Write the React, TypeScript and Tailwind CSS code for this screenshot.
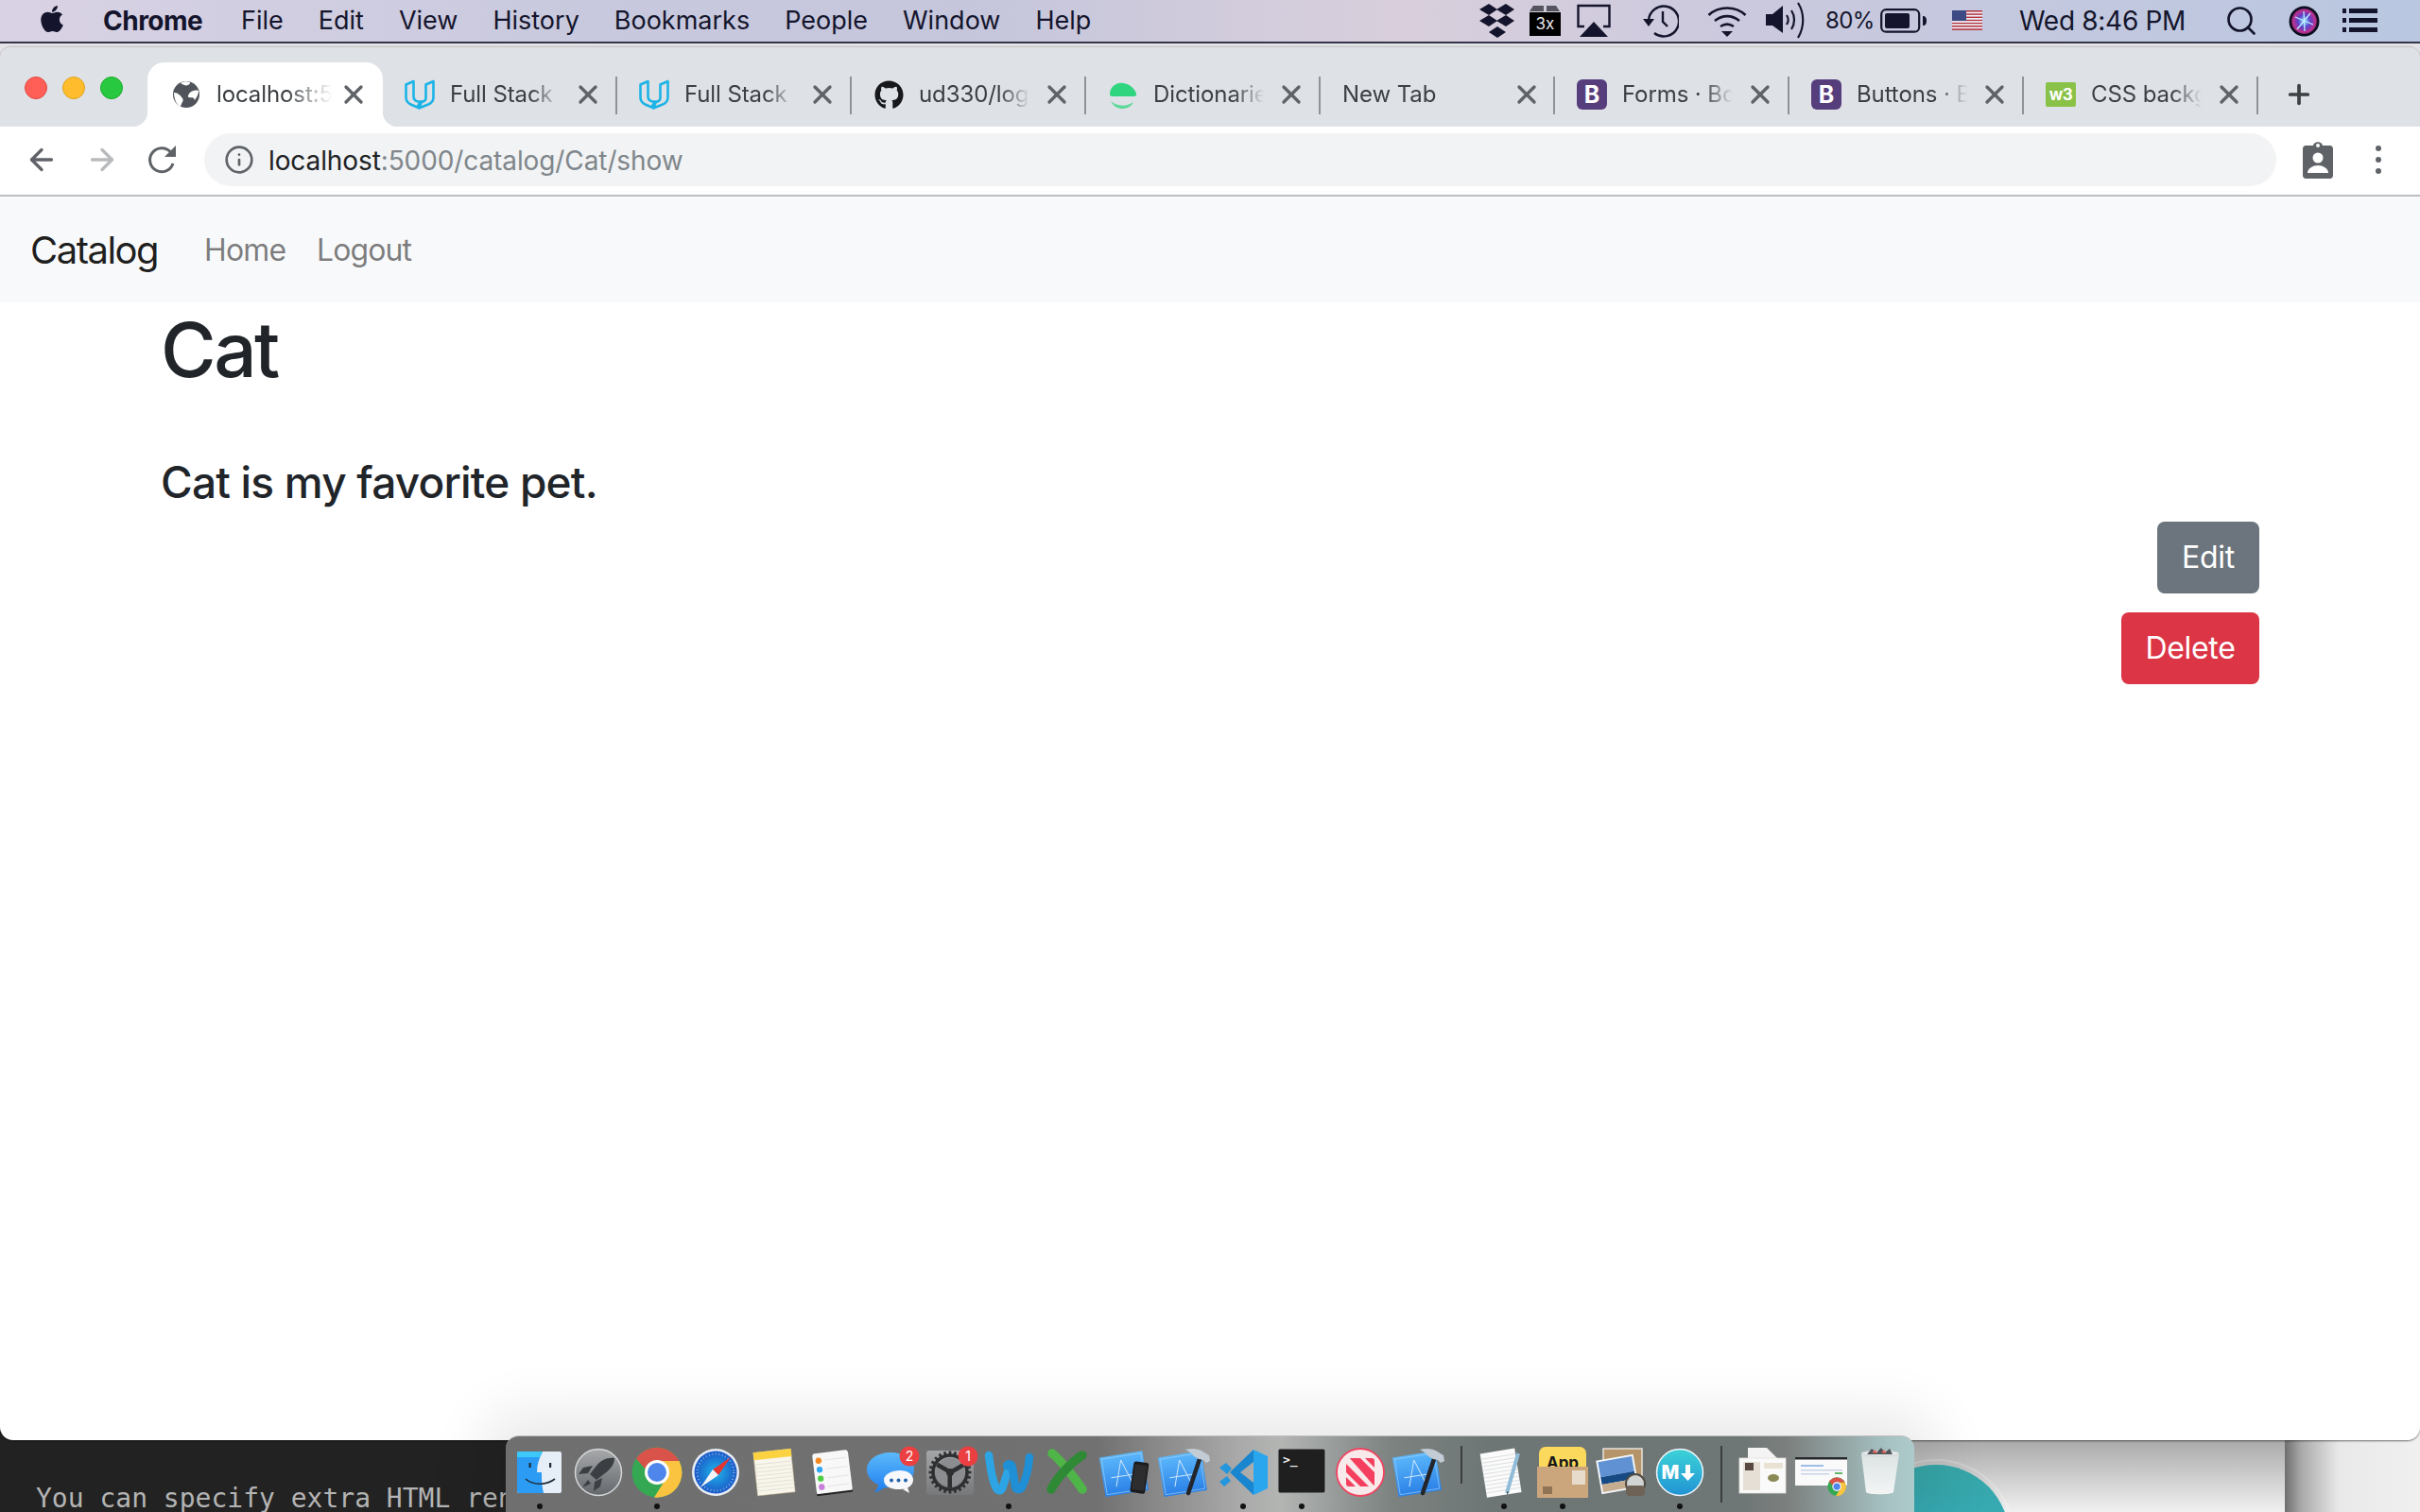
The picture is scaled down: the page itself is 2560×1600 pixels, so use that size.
import { useId } from "react";
import type { ReactNode } from "react";
import { X, Plus, ArrowLeft, ArrowRight, Info, Search } from "lucide-react";
import { FaApple, FaGithub } from "react-icons/fa";

const INK = "#14152c";

/* ---------- menu bar icons ---------- */

function DropboxIcon() {
  const diamonds = [
    [10, 7],
    [28, 7],
    [10, 19],
    [28, 19],
  ];
  return (
    <svg width="38" height="38" viewBox="0 0 38 38" fill={INK}>
      {diamonds.map(([x, y]) => (
        <polygon key={`${x}-${y}`} points={`${x - 10},${y} ${x},${y - 6} ${x + 9},${y} ${x},${y + 6}`} />
      ))}
      <polygon points="10,31 19,25 28,31 19,37" />
    </svg>
  );
}

function ThreeXIcon() {
  return (
    <svg width="33" height="34" viewBox="0 0 33 34">
      <polygon points="4,1 15,1 15,7 0,7" fill="#55555f" />
      <polygon points="18,1 28,1 32,7 18,7" fill="#55555f" />
      <rect x="0" y="8" width="33" height="25" fill="#000" />
      <text x="16.5" y="26" textAnchor="middle" fontSize="17" fill="#e8e8e8" fontFamily="Inter, sans-serif">
        3x
      </text>
    </svg>
  );
}

function AirplayIcon() {
  return (
    <svg width="36" height="36" viewBox="0 0 36 36" fill="none" stroke={INK} strokeWidth="2.4">
      <path d="M8 24H1.5V2h33v22H28" />
      <polygon points="18,19 33,35 3,35" fill={INK} stroke="none" />
    </svg>
  );
}

function TimeMachineIcon() {
  return (
    <svg width="38" height="36" viewBox="0 0 38 36" fill="none" stroke={INK} strokeWidth="2.4">
      <path d="M6 18A16 16 0 1 1 12 31" />
      <polygon points="0,16 12,16 6,24" fill={INK} stroke="none" />
      <path d="M21 8v11l5 5" />
    </svg>
  );
}

function WifiIcon() {
  return (
    <svg width="42" height="36" viewBox="0 0 42 36" fill="none" stroke={INK} strokeWidth="2.6">
      <path d="M1.5 12C12 2 30 2 40.5 12" />
      <path d="M8 18c8-6.5 18-6.5 26 0" />
      <path d="M14 24c4.500-3 9.500-3 14 0" />
      <polygon points="15,29 27,29 21,35" fill={INK} stroke="none" />
    </svg>
  );
}

function VolumeIcon() {
  return (
    <svg width="42" height="40" viewBox="0 0 42 40" fill="none" stroke={INK} strokeWidth="2.2">
      <polygon points="0,13 7,13 18,4 18,33 7,25 0,25" fill={INK} stroke="none" />
      <path d="M22 14c2 3 2 7 0 10" />
      <path d="M27 9c4 6 4 14 0 20" />
      <path d="M34 1c7 11 7 25 0 37" />
    </svg>
  );
}

function BatteryIcon() {
  return (
    <svg width="50" height="26" viewBox="0 0 50 26" fill={INK}>
      <rect x="1.200" y="1.200" width="40" height="23.500" rx="5" fill="none" stroke={INK} strokeWidth="2.2" />
      <rect x="5" y="5" width="26" height="16" rx="2" />
      <path d="M45 8c3 0 4 2 4 5s-1 5-4 5z" />
    </svg>
  );
}

function FlagIcon() {
  return (
    <svg width="32" height="22" viewBox="0 0 32 22">
      {Array.from({ length: 7 }).map((_, i) => (
        <rect key={i} x="0" y={i * 3.2} width="32" height="1.700" fill="#b5303d" />
      ))}
      {Array.from({ length: 6 }).map((_, i) => (
        <rect key={i} x="0" y={1.700 + i * 3.2} width="32" height="1.500" fill="#f4f4f8" />
      ))}
      <rect x="0" y="0" width="15" height="11" fill="#3d4a83" />
    </svg>
  );
}

function SiriIcon() {
  const id = useId();
  return (
    <svg width="33" height="33" viewBox="0 0 33 33">
      <defs>
        <radialGradient id={id} cx="50%" cy="50%" r="55%">
          <stop offset="0" stopColor="#8de0ff" />
          <stop offset="0.45" stopColor="#5b3fc9" />
          <stop offset="0.8" stopColor="#c0318f" />
          <stop offset="1" stopColor="#14152c" />
        </radialGradient>
      </defs>
      <circle cx="16.500" cy="16.500" r="16" fill="#0c0d1f" />
      <circle cx="16.500" cy="16.500" r="13.500" fill={`url(#${id})`} />
      <path d="M7 12l19 8M9 25L23 8M16 6l1 21" stroke="#bdf0ff" strokeWidth="1.300" />
    </svg>
  );
}

function ListIcon() {
  return (
    <svg width="37" height="26" viewBox="0 0 37 26" fill={INK}>
      <rect x="0" y="0" width="4" height="5" />
      <rect x="7" y="0" width="30" height="5" />
      <rect x="0" y="10" width="4" height="5" />
      <rect x="7" y="10" width="30" height="5" />
      <rect x="0" y="20" width="4" height="5" />
      <rect x="7" y="20" width="30" height="5" />
    </svg>
  );
}

/* ---------- favicons ---------- */

function GlobeFavicon() {
  return (
    <svg width="30" height="30" viewBox="0 0 30 30">
      <circle cx="15" cy="15" r="14" fill="#50545a" />
      <path d="M2 13c4 0 7 3 9 6s-1 4-2 9c-4-2-7-8-7-15z" fill="#fff" />
      <path d="M28 11c-3-1-7 0-9 2s-3 5-1 5c2 1 5-1 6 3 2-3 4-6 4-10z" fill="#fff" />
      <path d="M9 3c3 2 6 3 8 2s2-2 2-3c-3-1-7-1-10 1z" fill="#fff" />
    </svg>
  );
}

function UdacityFavicon() {
  return (
    <svg width="32" height="32" viewBox="0 0 32 32" fill="none" stroke="#1cb4e6" strokeWidth="2.600" strokeLinejoin="round">
      <path d="M1.500 5.500l8-3.500v16c0 3 2 5 5 5.500l4 0c-3 .5-3 2-3 2l-2 4-7-3c-3-1.500-5-4-5-7.500z" />
      <path d="M30.500 2l-8 3.500v14c0 3-2 4-4.500 4.500l-3 6.500 10-4c3.500-1.500 5.500-4 5.500-7.500z" />
    </svg>
  );
}

function DictionaryFavicon() {
  return (
    <svg width="32" height="30" viewBox="0 0 32 30">
      <path d="M2 15C2 7 9 2 16 3c7 1 12 5 14 11 1 2-1 3-3 3H5c-2 0-3-1-3-2z" fill="#2fd67f" />
      <path d="M3 22c7 6 17 6 24 1-3 6-8 7-12 7s-9-2-12-8z" fill="#2fd67f" opacity="0.75" />
    </svg>
  );
}

function BootstrapFavicon() {
  return (
    <div className="w-[32px] h-[32px] rounded-[6px] bg-[#563d7c] flex items-center justify-center text-white text-[25px] font-bold leading-none">
      B
    </div>
  );
}

function W3Favicon() {
  return (
    <div className="w-[32px] h-[26px] rounded-[2px] bg-[#8ac249] flex items-center justify-center text-white text-[17px] font-bold leading-none tracking-tight">
      w3
    </div>
  );
}

/* ---------- dock icons, all on a 60x60 box centred on the cell ---------- */

function FinderIcon() {
  return (
    <svg width="60" height="60" viewBox="0 0 60 60">
      <rect x="6" y="8" width="47" height="44" rx="2" fill="#e6eef7" />
      <path d="M8 8h25c-4 8-6 14-6 22h5c0 8 0 14 2 22H8a2 2 0 0 1-2-2V10a2 2 0 0 1 2-2z" fill="#2c9bf3" />
      <path d="M8 8h25l-3 6H6v-4a2 2 0 0 1 2-2z" fill="#3cc8f8" />
      <rect x="18.500" y="20" width="2.200" height="5" fill="#1d2b3a" />
      <rect x="40" y="20" width="2.200" height="5" fill="#1d2b3a" />
      <path d="M15 37c8 7 22 7 31 0" fill="none" stroke="#1d2b3a" strokeWidth="1.600" />
    </svg>
  );
}

function LaunchpadIcon() {
  const id = useId();
  return (
    <svg width="60" height="60" viewBox="0 0 60 60">
      <defs>
        <linearGradient id={id} x1="0" y1="0" x2="0" y2="1">
          <stop offset="0" stopColor="#a7a9ab" />
          <stop offset="1" stopColor="#63676b" />
        </linearGradient>
      </defs>
      <circle cx="30" cy="30" r="24.500" fill={`url(#${id})`} stroke="#d4d6d8" strokeWidth="1.500" />
      <path d="M47 15c-8-1-14 2-19 8l-7 9 7 6 9-7c6-5 10-9 10-16z" fill="#3b3e42" />
      <path d="M24 23l-10 2-5 7 10-1zM34 36l-2 9-7 5 1-10zM19 38l-6 8 9-4z" fill="#3b3e42" />
    </svg>
  );
}

function ChromeBall() {
  return (
    <>
      <circle cx="30" cy="30" r="26.500" fill="#34a853" />
      <path d="M8 15.500A26.500 26.500 0 0 1 53.500 18H30c-6 0-11 4-12 9z" fill="#d9534a" />
      <path d="M53.500 18A26.500 26.500 0 0 1 27 56.500L40 36c2-6 0-14-10-18z" fill="#fbc440" />
      <circle cx="30" cy="30" r="13" fill="#fff" />
      <circle cx="30" cy="30" r="10" fill="#4f86ec" />
    </>
  );
}

function ChromeIcon() {
  return (
    <svg width="60" height="60" viewBox="0 0 60 60">
      <ChromeBall />
    </svg>
  );
}

function SafariIcon() {
  const id = useId();
  return (
    <svg width="60" height="60" viewBox="0 0 60 60">
      <defs>
        <radialGradient id={id} cx="50%" cy="50%" r="55%">
          <stop offset="0" stopColor="#1fb5ea" />
          <stop offset="1" stopColor="#1b50c4" />
        </radialGradient>
      </defs>
      <circle cx="30" cy="30" r="25" fill="#e9eef5" />
      <circle cx="30" cy="30" r="22.500" fill={`url(#${id})`} />
      <circle cx="30" cy="30" r="19.500" fill="none" stroke="#cfe3fa" strokeWidth="2" strokeDasharray="1 2.500" opacity="0.6" />
      <polygon points="46,14 33,33 27,27" fill="#e5352f" />
      <polygon points="14,46 33,33 27,27" fill="#f3f4f6" />
    </svg>
  );
}

function NotesIcon() {
  const lines = [20, 24, 28, 32, 36, 40, 44, 48];
  return (
    <svg width="60" height="60" viewBox="0 0 60 60">
      <g transform="rotate(-6 30 30)">
        <rect x="10" y="7" width="40" height="46" fill="#f8f5ea" stroke="#b0a27c" strokeWidth="0.500" />
        <rect x="10" y="7" width="40" height="8" fill="#fbd341" />
        {lines.map((y) => (
          <line key={y} x1="10" x2="50" y1={y} y2={y} stroke="#dddbd2" strokeWidth="0.700" />
        ))}
      </g>
    </svg>
  );
}

function RemindersIcon() {
  const dots = [
    [16, "#f58a23"],
    [25.500, "#31a8f3"],
    [35, "#4cce42"],
    [44, "#c97fdb"],
  ] as const;
  return (
    <svg width="60" height="60" viewBox="0 0 60 60">
      <g transform="rotate(-7 30 30)">
        <rect x="10.500" y="8" width="38" height="44" rx="3" fill="#f8f8f8" />
        <rect x="10.500" y="51" width="38" height="2" fill="#222" />
        {dots.map(([y, c]) => (
          <g key={y}>
            <circle cx="16.500" cy={y} r="3.200" fill={c} />
            <line x1="23" x2="46" y1={y} y2={y} stroke="#ddd" strokeWidth="0.700" />
          </g>
        ))}
      </g>
    </svg>
  );
}

function Badge({ x, n }: { x: number; n: string }) {
  return (
    <>
      <circle cx={x} cy="13" r="10.500" fill="#ec3f41" />
      <text x={x} y="18" textAnchor="middle" fontSize="14" fill="#fff" fontFamily="Inter, sans-serif">
        {n}
      </text>
    </>
  );
}

function MessagesIcon() {
  const id = useId();
  return (
    <svg width="60" height="60" viewBox="0 0 60 60">
      <defs>
        <linearGradient id={id} x1="0" y1="0" x2="0" y2="1">
          <stop offset="0" stopColor="#5cb9fb" />
          <stop offset="1" stopColor="#1e7ff0" />
        </linearGradient>
      </defs>
      <path d="M29 9c14 0 25 8 25 18 0 11-11 19-25 19-3 0-6 0-8 1-2 2-6 4-9 4 2-2 4-5 4-8C9 40 4 34 4 27 4 17 15 9 29 9z" fill={`url(#${id})`} />
      <path d="M39 28c8 0 14 4 14 10s-6 10-14 10h-3c-4 0-14-2-14-10 0-6 9-10 17-10z" fill="#f7f8fb" />
      <path d="M47 46l2 6-7-4z" fill="#f7f8fb" />
      <circle cx="30" cy="38.500" r="2" fill="#2463ac" />
      <circle cx="37.500" cy="38.500" r="2" fill="#2463ac" />
      <circle cx="45" cy="38.500" r="2" fill="#2463ac" />
      <Badge x={49} n="2" />
    </svg>
  );
}

function SystemPrefsIcon() {
  const id = useId();
  const spokes = [0, 120, 240];
  const teeth = Array.from({ length: 24 }).map((_, i) => i * 15);
  return (
    <svg width="60" height="60" viewBox="0 0 60 60">
      <defs>
        <linearGradient id={id} x1="0" y1="0" x2="0" y2="1">
          <stop offset="0" stopColor="#a4a6a8" />
          <stop offset="1" stopColor="#76787a" />
        </linearGradient>
      </defs>
      <rect x="5" y="7" width="50" height="47" rx="3" fill={`url(#${id})`} />
      {teeth.map((a) => (
        <rect key={a} x="28.700" y="7.500" width="2.600" height="5" fill="#2e2f31" transform={`rotate(${a} 30 30)`} />
      ))}
      <circle cx="30" cy="30" r="18" fill="none" stroke="#2e2f31" strokeWidth="3.500" />
      <circle cx="30" cy="30" r="15" fill="#8b8d90" />
      {spokes.map((a) => (
        <rect key={a} x="28" y="14" width="4.500" height="16" fill="#2e2f31" transform={`rotate(${a + 60} 30 30)`} />
      ))}
      <circle cx="30" cy="30" r="4" fill="#2e2f31" />
      <Badge x={49} n="1" />
    </svg>
  );
}

function WordIcon() {
  return (
    <svg width="60" height="60" viewBox="0 0 60 60" fill="none" strokeLinecap="round">
      <path d="M9 12c2 14 3 26 8 35 3 4 6 2 7-2l6-19" stroke="#2da4e3" strokeWidth="8.500" />
      <path d="M28 23c2-3 5-2 6 2l3 20c1 4 5 4 7 1 4-8 7-20 8-32" stroke="#1f8fd6" strokeWidth="8.500" />
    </svg>
  );
}

function ExcelIcon() {
  return (
    <svg width="60" height="60" viewBox="0 0 60 60" fill="none" strokeLinecap="round">
      <path d="M14 10c7 5 24 26 32 38" stroke="#4fb548" strokeWidth="9.500" />
      <path d="M46 12C37 17 20 34 13 48" stroke="#2f8a36" strokeWidth="9.500" />
    </svg>
  );
}

function BlueprintPage() {
  const id = useId();
  return (
    <>
      <defs>
        <linearGradient id={id} x1="0" y1="0" x2="0" y2="1">
          <stop offset="0" stopColor="#5bb7fb" />
          <stop offset="1" stopColor="#2a80e6" />
        </linearGradient>
      </defs>
      <g transform="rotate(-9 26 32)">
        <rect x="5" y="11" width="46" height="42" fill={`url(#${id})`} />
        <rect x="7" y="13" width="42" height="38" fill="none" stroke="#a5d4fb" strokeWidth="0.600" />
        <path d="M27 17L18 44M27 17l9 27M14 34h28" fill="none" stroke="#cce6fd" strokeWidth="1" />
      </g>
    </>
  );
}

function SimulatorIcon() {
  return (
    <svg width="60" height="60" viewBox="0 0 60 60">
      <BlueprintPage />
      <g transform="rotate(8 44 38)">
        <rect x="36" y="19" width="16" height="33" rx="2.500" fill="#1b1b1d" />
        <rect x="37.500" y="22" width="13" height="27" fill="#2d2d30" />
      </g>
    </svg>
  );
}

function XcodeIcon() {
  return (
    <svg width="60" height="60" viewBox="0 0 60 60">
      <BlueprintPage />
      <path d="M46 16L34 52" stroke="#23252a" strokeWidth="4.500" strokeLinecap="round" />
      <path d="M31 6c7-2 15-1 20 3l5 3 1 6-4 2-3-3-5-1-5-3c-2-3-5-5-9-7z" fill="#c3ccd4" />
    </svg>
  );
}

function VSCodeIcon() {
  return (
    <svg width="60" height="60" viewBox="0 0 60 60">
      <path d="M41 6l15 7v34l-15 7z" fill="#2aa6ee" />
      <path d="M41 6L16 30l25 24 0-13-14-11 14-11z" fill="#1a86cf" />
      <path d="M12 20L5 25l8 7 5-6zM13 34l-8 6 5 5 7-6z" fill="#2496dd" />
    </svg>
  );
}

function TerminalIcon() {
  return (
    <svg width="60" height="60" viewBox="0 0 60 60">
      <rect x="5" y="5" width="50" height="47" rx="2" fill="#1f1f1f" stroke="#a9acad" strokeWidth="1" />
      <text x="10" y="21" fontSize="13" fontWeight="700" fill="#f2f2f2" fontFamily="'DejaVu Sans Mono', monospace">
        {">_"}
      </text>
    </svg>
  );
}

function NewsIcon() {
  return (
    <svg width="60" height="60" viewBox="0 0 60 60">
      <circle cx="30" cy="30" r="25" fill="#f8e9ea" stroke="#f04461" strokeWidth="1.800" />
      <rect x="15" y="15" width="30" height="30" rx="3" fill="#f4405e" />
      <path d="M13 19l28 28h6L17 13z" fill="#f8e9ea" />
      <path d="M28 13h5l14 14v5zM13 28v5l14 14h5z" fill="#f8e9ea" />
    </svg>
  );
}

function TextEditIcon() {
  return (
    <svg width="60" height="60" viewBox="0 0 60 60">
      <g transform="rotate(-9 28 30)">
        <rect x="8" y="7" width="37" height="47" fill="#fbfbfb" />
        {[13, 17, 21, 25, 29, 33, 37, 41, 45, 49].map((y) => (
          <line key={y} x1="8" x2="45" y1={y} y2={y} stroke="#c9ccd2" strokeWidth="0.600" />
        ))}
      </g>
      <path d="M45 10L33 52" stroke="#90bcd9" strokeWidth="4" />
      <path d="M33.500 50l-.5 4 2-3z" fill="#333" />
    </svg>
  );
}

function AppBoxIcon() {
  return (
    <svg width="60" height="60" viewBox="0 0 60 60">
      <rect x="5" y="3" width="50" height="30" rx="7" fill="#fbd95d" />
      <text x="30" y="26" textAnchor="middle" fontSize="17" fontWeight="700" fill="#1a1a1a" fontFamily="Inter, sans-serif">
        App
      </text>
      <rect x="3" y="24" width="54" height="33" fill="#cba67c" />
      <rect x="40" y="28" width="14" height="15" fill="#e7dccb" />
      <rect x="9" y="45" width="10" height="8" fill="#67533c" opacity="0.6" />
    </svg>
  );
}

function PreviewIcon() {
  return (
    <svg width="60" height="60" viewBox="0 0 60 60">
      <rect x="11" y="5" width="41" height="40" fill="#b49468" stroke="#e8e4da" strokeWidth="1.500" />
      <g transform="rotate(-10 26 32)">
        <rect x="6" y="14" width="40" height="36" fill="#f2f4f6" />
        <rect x="8" y="16" width="36" height="16" fill="#5f91d3" />
        <rect x="8" y="32" width="36" height="8" fill="#164a84" />
        <rect x="8" y="40" width="36" height="8" fill="#c6ad90" />
      </g>
      <circle cx="45" cy="42" r="10" fill="#d2d4d4" stroke="#4f4a42" strokeWidth="2" />
      <rect x="35" y="44" width="20" height="11" rx="4" fill="#6e6256" />
    </svg>
  );
}

function MarkdownIcon() {
  const id = useId();
  return (
    <svg width="60" height="60" viewBox="0 0 60 60">
      <defs>
        <linearGradient id={id} x1="0" y1="0" x2="0" y2="1">
          <stop offset="0" stopColor="#3cd3d8" />
          <stop offset="1" stopColor="#2193d4" />
        </linearGradient>
      </defs>
      <circle cx="30" cy="30" r="24.500" fill={`url(#${id})`} stroke="#f2f6f8" strokeWidth="1.500" />
      <text x="20" y="37" textAnchor="middle" fontSize="20" fontWeight="800" fill="#fff" fontFamily="Inter, sans-serif">
        M
      </text>
      <path d="M41 22v9h5l-7.500 8-7.500-8h5v-9z" fill="#fff" />
    </svg>
  );
}

function DocThumbIcon() {
  return (
    <svg width="60" height="60" viewBox="0 0 60 60">
      <path d="M14 4h20l12 12v16H14z" fill="#f4f4f4" />
      <rect x="5" y="15" width="49" height="37" fill="#fafafa" stroke="#e4e0dc" strokeWidth="0.800" />
      <rect x="9" y="19" width="18" height="30" fill="#e5dfd5" />
      <rect x="11" y="20" width="9" height="8" fill="#584a42" />
      <rect x="31" y="20" width="20" height="6" fill="#e9e2d2" />
      <ellipse cx="41" cy="36" rx="6" ry="4" fill="#8a8a56" />
    </svg>
  );
}

function PageThumbIcon() {
  return (
    <svg width="60" height="60" viewBox="0 0 60 60">
      <rect x="2" y="14" width="55" height="30" fill="#fafafa" />
      <rect x="2" y="14" width="55" height="2.500" fill="#26282b" />
      <rect x="8" y="22" width="24" height="2" fill="#9bbde8" />
      <rect x="8" y="27" width="44" height="1.500" fill="#c6d4e8" />
      <rect x="8" y="31" width="30" height="1.500" fill="#c6d4e8" />
      <rect x="44" y="30" width="8" height="2" fill="#64b865" />
      <g transform="translate(35 34) scale(0.37)">
        <ChromeBall />
      </g>
    </svg>
  );
}

function TrashIcon() {
  const id = useId();
  return (
    <svg width="60" height="60" viewBox="0 0 60 60">
      <defs>
        <linearGradient id={id} x1="0" y1="0" x2="0" y2="1">
          <stop offset="0" stopColor="#dde3e3" />
          <stop offset="1" stopColor="#f3f5f5" />
        </linearGradient>
      </defs>
      <path d="M10 11l5 40c1 3 28 3 29 0l6-40z" fill={`url(#${id})`} />
      <ellipse cx="30" cy="10" rx="20" ry="3" fill="#e8ecec" stroke="#c9cfcf" strokeWidth="0.800" />
      <path d="M16 11l5-6 5 4 5-5 4 5 5-4 3 6z" fill="#50535a" />
      <path d="M21 9l4-3 2 4zM31 9l4-3 1 4z" fill="#e26b5c" />
    </svg>
  );
}

/* ---------- browser ---------- */

interface TabInfo {
  title: string;
  icon: ReactNode;
}

const TABS: TabInfo[] = [
  { title: "Full Stack Web", icon: <UdacityFavicon /> },
  { title: "Full Stack Web", icon: <UdacityFavicon /> },
  { title: "ud330/logging", icon: <FaGithub size={31} color="#16181b" /> },
  { title: "Dictionaries", icon: <DictionaryFavicon /> },
  { title: "New Tab", icon: null },
  { title: "Forms · Bootstrap", icon: <BootstrapFavicon /> },
  { title: "Buttons · Bootstrap", icon: <BootstrapFavicon /> },
  { title: "CSS background", icon: <W3Favicon /> },
];

function Tab({ title, icon }: TabInfo) {
  return (
    <div className="relative w-[248px] h-[68px] flex items-center pl-[23px] shrink-0">
      {icon && (
        <div className="w-[32px] h-[32px] mr-[16px] flex items-center justify-center shrink-0">{icon}</div>
      )}
      <div
        className={`${icon ? "w-[122px]" : "w-[171px]"} overflow-hidden whitespace-nowrap text-[24px] leading-[30px] text-[#3c4043] tracking-[-0.1px] [mask-image:linear-gradient(to_right,black_70%,transparent_96%)]`}
      >
        {title}
      </div>
      <div className="w-[48px] flex justify-center shrink-0 text-[#5f6368]">
        <X size={32} strokeWidth={2.500} />
      </div>
      <div className="absolute right-0 top-[15px] h-[40px] w-[2px] bg-[#8f9296]" />
    </div>
  );
}

function TabStrip() {
  return (
    <div className="h-[84px] bg-[#dee1e6] flex items-end rounded-t-[12px]">
      <div className="w-[156px] h-[68px] shrink-0 flex items-center gap-[16px] pl-[26px] pb-[15px]">
        <div className="w-[24px] h-[24px] rounded-full bg-[#ff5f57] border border-[#e2463f]" />
        <div className="w-[24px] h-[24px] rounded-full bg-[#ffbd2e] border border-[#e1a116]" />
        <div className="w-[24px] h-[24px] rounded-full bg-[#28c940] border border-[#1aab29]" />
      </div>
      {/* active tab with the flared bottom corners */}
      <div className="relative w-[249px] h-[68px] shrink-0 bg-white rounded-t-[18px] flex items-center pl-[26px]">
        <div className="absolute -left-[16px] bottom-0 w-[16px] h-[16px] bg-[radial-gradient(circle_at_0_0,transparent_16px,white_16.5px)]" />
        <div className="absolute -right-[16px] bottom-0 w-[16px] h-[16px] bg-[radial-gradient(circle_at_100%_0,transparent_16px,white_16.5px)]" />
        <div className="w-[30px] h-[30px] mr-[17px] shrink-0">
          <GlobeFavicon />
        </div>
        <div className="w-[122px] overflow-hidden whitespace-nowrap text-[24px] leading-[30px] text-[#3c4043] tracking-[-0.1px] [mask-image:linear-gradient(to_right,black_60%,transparent_100%)]">
          localhost:5000/catalog/Cat/show
        </div>
        <div className="w-[46px] flex justify-center shrink-0 text-[#5f6368]">
          <X size={32} strokeWidth={2.500} />
        </div>
      </div>
      {TABS.map((t, i) => (
        <Tab key={i} {...t} />
      ))}
      <div className="h-[68px] pl-[27px] flex items-center text-[#3c4043]">
        <Plus size={32} strokeWidth={2.800} />
      </div>
    </div>
  );
}

function Toolbar() {
  return (
    <div className="h-[74px] bg-white border-b-2 border-[#bdbec0] flex items-center pb-[2px]">
      <div className="w-[216px] shrink-0 flex items-center pl-[26px]">
        <ArrowLeft size={36} strokeWidth={2.200} color="#5f6368" />
        <ArrowRight size={36} strokeWidth={2.200} color="#b8babd" className="ml-[28px]" />
        <svg width="36" height="36" viewBox="0 0 36 36" fill="none" stroke="#5f6368" strokeWidth="3" className="ml-[28px]">
          <path d="M29 22a12.500 12.500 0 1 1-2.500-12" />
          <polygon points="32,3 32,15 20,15" fill="#5f6368" stroke="none" />
        </svg>
      </div>
      <div className="w-[2192px] h-[56px] shrink-0 rounded-full bg-[#f1f3f4] flex items-center pl-[21px] text-[28px] tracking-[-0.1px]">
        <Info size={32} strokeWidth={2} color="#5f6368" />
        <span className="ml-[15px] pt-[2px] text-[#202124]">localhost</span>
        <span className="pt-[2px] text-[#80868b]">:5000/catalog/Cat/show</span>
      </div>
      <div className="pl-[28px] shrink-0">
        <svg width="32" height="40" viewBox="0 0 32 40" fill="#5f6368">
          <path d="M3 5h8c1-5 9-5 10 0h8c1.500 0 3 1.500 3 3v29c0 1.500-1.500 3-3 3H3c-1.500 0-3-1.500-3-3V8c0-1.500 1.500-3 3-3z" />
          <circle cx="16" cy="5" r="2" fill="#fff" />
          <circle cx="16" cy="18" r="5.500" fill="#fff" />
          <path d="M5 34c0-5 6-8 11-8s11 3 11 8z" fill="#fff" />
        </svg>
      </div>
      <div className="pl-[45px] shrink-0 flex flex-col gap-[6px]">
        <div className="w-[6px] h-[6px] rounded-full bg-[#5f6368]" />
        <div className="w-[6px] h-[6px] rounded-full bg-[#5f6368]" />
        <div className="w-[6px] h-[6px] rounded-full bg-[#5f6368]" />
      </div>
    </div>
  );
}

function CatalogPage() {
  return (
    <div className="flex-1 bg-white flex flex-col rounded-b-[14px]">
      <nav className="h-[112px] bg-[#f8f9fa] flex items-center px-[32px] pt-[2px] shrink-0">
        <span className="w-[184px] text-[40px] text-black/90 tracking-[-1.5px]">Catalog</span>
        <a className="w-[119px] text-[32px] text-black/50 tracking-[-0.8px]">Home</a>
        <a className="text-[32px] text-black/50 tracking-[-0.9px]">Logout</a>
      </nav>
      <div className="px-[170px] pt-[2px] flex flex-col">
        <h1 className="text-[80px] font-medium leading-[96px] text-[#212529] tracking-[-2.500px]">Cat</h1>
        <h4 className="mt-[63px] text-[46px] font-medium leading-[58px] text-[#212529] tracking-[-0.8px]">Cat is my favorite pet.</h4>
        <div className="flex flex-col items-end gap-[20px] mt-[13px]">
          <button className="h-[76px] w-[108px] rounded-[8px] bg-[#6c757d] text-white text-[32px] tracking-[-0.2px]">Edit</button>
          <button className="h-[76px] w-[146px] rounded-[8px] bg-[#dc3545] text-white text-[32px] tracking-[-0.3px]">Delete</button>
        </div>
      </div>
    </div>
  );
}

/* ---------- macOS chrome ---------- */

function MenuBar() {
  const items = ["File", "Edit", "View", "History", "Bookmarks", "People", "Window", "Help"];
  return (
    <div className="h-[46px] shrink-0 border-b-2 border-[#35354a] flex items-center justify-between pl-[39px] pr-[45px] bg-[linear-gradient(90deg,#d9d2e4_0%,#c8c9de_25%,#c5c6dc_40%,#d9cfdc_58%,#cbc9de_72%,#b9c7e0_100%)] text-[27px] text-[#14152c]">
      <div className="flex items-center">
        <FaApple size={32} className="mr-[38px] -mt-[4px]" />
        <span className="w-[146px] text-[28px] font-bold tracking-[-0.5px]">Chrome</span>
        <div className="flex items-center gap-[37px]">
          {items.map((m) => (
            <span key={m}>{m}</span>
          ))}
        </div>
      </div>
      <div className="flex items-center">
        <DropboxIcon />
        <div className="ml-[15px]">
          <ThreeXIcon />
        </div>
        <div className="ml-[17px]">
          <AirplayIcon />
        </div>
        <div className="ml-[34px]">
          <TimeMachineIcon />
        </div>
        <div className="ml-[30px]">
          <WifiIcon />
        </div>
        <div className="ml-[20px]">
          <VolumeIcon />
        </div>
        <span className="ml-[21px] w-[49px] text-[24px] tracking-[-0.6px] whitespace-nowrap">80%</span>
        <div className="ml-[9px]">
          <BatteryIcon />
        </div>
        <div className="ml-[26px]">
          <FlagIcon />
        </div>
        <span className="ml-[39px] w-[174px] text-[28px] tracking-[-0.3px] whitespace-nowrap">Wed 8:46 PM</span>
        <Search size={36} strokeWidth={1.800} className="ml-[43px]" />
        <div className="ml-[32px]">
          <SiriIcon />
        </div>
        <div className="ml-[24px]">
          <ListIcon />
        </div>
      </div>
    </div>
  );
}

function DockItem({ children, running }: { children: ReactNode; running?: boolean }) {
  return (
    <div className="w-[62px] h-[81px] shrink-0 flex flex-col items-center pt-[8px]">
      {children}
      {running && <div className="mt-[3px] w-[6px] h-[6px] rounded-full bg-[#111]" />}
    </div>
  );
}

function DockDivider({ width, height }: { width: string; height: string }) {
  return (
    <div className={`${width} shrink-0 flex justify-center pt-[10px]`}>
      <div className={`w-[2px] ${height} bg-[#3a3d3d]`} />
    </div>
  );
}

function Dock() {
  return (
    <div className="absolute left-[535px] top-[1519px] z-20 w-[1490px] h-[81px] rounded-t-[14px] pl-[5px] flex shadow-[0_0_60px_24px_rgba(0,0,0,0.09)] border-t border-[#bdbdbd] bg-[linear-gradient(90deg,#6f6f6f_0%,#717171_42%,#a8a9a8_52%,#b3b5b3_55%,#7b8280_63%,#6e7675_70%,#6f7776_88%,#7c807e_91%,#a6c1c2_98%,#aecbcc_100%)]">
      <DockItem running><FinderIcon /></DockItem>
      <DockItem><LaunchpadIcon /></DockItem>
      <DockItem running><ChromeIcon /></DockItem>
      <DockItem><SafariIcon /></DockItem>
      <DockItem><NotesIcon /></DockItem>
      <DockItem><RemindersIcon /></DockItem>
      <DockItem><MessagesIcon /></DockItem>
      <DockItem><SystemPrefsIcon /></DockItem>
      <DockItem running><WordIcon /></DockItem>
      <DockItem><ExcelIcon /></DockItem>
      <DockItem><SimulatorIcon /></DockItem>
      <DockItem><XcodeIcon /></DockItem>
      <DockItem running><VSCodeIcon /></DockItem>
      <DockItem running><TerminalIcon /></DockItem>
      <DockItem><NewsIcon /></DockItem>
      <DockItem><XcodeIcon /></DockItem>
      <DockDivider width="w-[28px]" height="h-[40px]" />
      <DockItem running><TextEditIcon /></DockItem>
      <DockItem running><AppBoxIcon /></DockItem>
      <DockItem><PreviewIcon /></DockItem>
      <DockItem running><MarkdownIcon /></DockItem>
      <DockDivider width="w-[26px]" height="h-[60px]" />
      <DockItem><DocThumbIcon /></DockItem>
      <DockItem><PageThumbIcon /></DockItem>
      <DockItem><TrashIcon /></DockItem>
    </div>
  );
}

function Desktop() {
  return (
    <div className="-mt-[14px] h-[90px] shrink-0 flex">
      <div className="w-[1400px] shrink-0 bg-[#222222] pl-[38px] pt-[58px] font-['DejaVu_Sans_Mono',monospace] text-[28px] leading-[36px] text-[#b4b4b4] whitespace-nowrap overflow-hidden">
        You can specify extra HTML rendering options
      </div>
      <div className="relative w-[1017px] shrink-0 overflow-hidden bg-[linear-gradient(180deg,#a9a9a9_15%,#f0f0f0_100%)]">
        <div className="absolute left-[570px] top-[40px] w-[156px] h-[156px] rounded-full bg-[linear-gradient(180deg,#36a5a6,#38b3cc)] outline-2 outline-offset-[4px] outline-white/20" />
      </div>
      <div className="flex-1 bg-[linear-gradient(90deg,#6e6e6e_0%,#a9a9a9_12%,#e9e9e9_40%,#f0f0f0_100%)]" />
    </div>
  );
}

export default function App() {
  return (
    <div className="relative w-[2560px] h-[1600px] overflow-hidden flex flex-col bg-[#e4e4e8] font-[Inter,sans-serif]">
      <MenuBar />
      <div className="relative z-10 mt-[3px] flex-1 flex flex-col rounded-t-[12px] rounded-b-[14px] border-t border-[#c4c4c4] shadow-[0_1px_2px_rgba(0,0,0,0.55)] min-h-0">
        <TabStrip />
        <Toolbar />
        <CatalogPage />
      </div>
      <Desktop />
      <Dock />
    </div>
  );
}
